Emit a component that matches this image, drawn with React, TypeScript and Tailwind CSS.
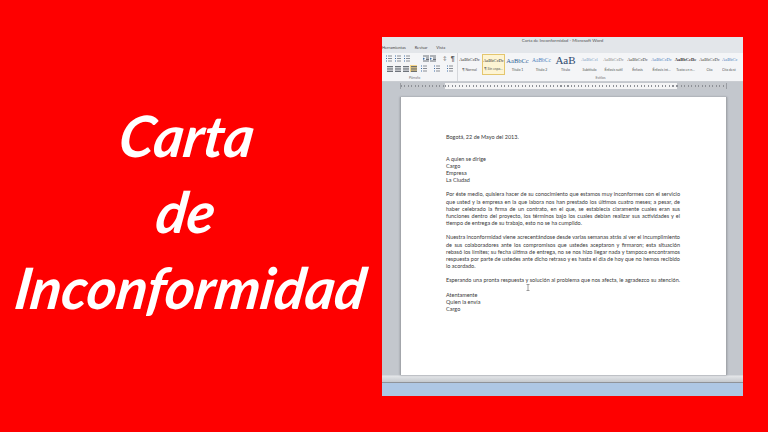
const FIRST_PARAGRAPH = [
  'Por éste medio, quisiera hacer de su conocimiento que estamos muy inconformes con el servicio',
  'que usted y la empresa en la que labora nos han prestado los últimos cuatro meses; a pesar, de',
  'haber celebrado la firma de un contrato, en el que, se establecía claramente cuales eran sus',
  'funciones dentro del proyecto, los términos bajo los cuales debían realizar sus actividades y el',
]
const SECOND_PARAGRAPH = [
  'Nuestra inconformidad viene acrecentándose desde varias semanas atrás al ver el incumplimiento',
  'de sus colaboradores ante los compromisos que ustedes aceptaron y firmaron; esta situación',
  'rebasó los límites; su fecha última de entrega, no se nos hizo llegar nada y tampoco encontramos',
  'respuesta por parte de ustedes ante dicho retraso y es hasta el día de hoy que no hemos recibido',
]
const STYLES = [
  { sample: 'AaBbCcDc', name: '¶ Normal', cls: 'text-[4.5px] text-[#333]', active: false },
  { sample: 'AaBbCcDc', name: '¶ Sin espa...', cls: 'text-[4.5px] text-[#333]', active: true },
  { sample: 'AaBbCc', name: 'Título 1', cls: 'text-[6.5px] text-[#2f5f94]', active: false },
  { sample: 'AaBbCc', name: 'Título 2', cls: 'text-[5.5px] text-[#4f81bd]', active: false },
  { sample: 'AaB', name: 'Título', cls: 'text-[11px] leading-[9px] text-[#2f4a6d]', active: false },
  { sample: 'AaBbCcl', name: 'Subtítulo', cls: 'text-[4.5px] text-[#7f9fc5]', active: false },
  { sample: 'AaBbCcDc', name: 'Énfasis sutil', cls: 'text-[4.5px] text-[#888]', active: false },
  { sample: 'AaBbCcDc', name: 'Énfasis', cls: 'text-[4.5px] text-[#444]', active: false },
  { sample: 'AaBbCcDc', name: 'Énfasis int...', cls: 'text-[4.5px] text-[#4f81bd]', active: false },
  { sample: 'AaBbCcDc', name: 'Texto en n...', cls: 'text-[4.5px] font-bold text-[#333]', active: false },
  { sample: 'AaBbCcDc', name: 'Cita', cls: 'text-[4.5px] text-[#444]', active: false },
]

function Justified ({ text }: { text: string }) {
  return <div className="text-justify [text-align-last:justify] whitespace-nowrap">{text}</div>
}

// list bullets, with the little dropdown dash after it
function ListIcon () {
  return (
    <svg width="8" height="7" viewBox="0 0 8 7" fill="none">
      <path d="M0 1h1M0 3.5h1M0 6h1" stroke="#3f6fa8" />
      <path d="M2 1h4M2 3.5h4M2 6h4" stroke="#8a8e95" />
    </svg>
  )
}

function IndentIcon () {
  return (
    <svg width="6" height="7" viewBox="0 0 6 7" fill="none">
      <path d="M0 1h6M3 3h3M3 4.5h3M0 6h6" stroke="#6b7079" />
      <path d="M0 2.5l2 1.2-2 1.2z" fill="#3f6fa8" />
    </svg>
  )
}

function AlignIcon ({ active }: { active?: boolean }) {
  return (
    <div className={'flex h-[7px] w-[7px] items-center justify-center ' + (active ? 'bg-[#f5d58a]' : '')}>
      <svg width="6" height="6" viewBox="0 0 6 6" fill="none">
        <path d="M0 .5h6M0 2.2h6M0 3.9h6M0 5.5h6" stroke="#5f646c" strokeWidth="0.9" />
      </svg>
    </div>
  )
}

function ParagraphGroup () {
  return (
    <div className="flex w-[76px] shrink-0 flex-col border-r border-[#d5d7db] pl-[4px] pt-[2px]">
      <div className="flex h-[7px] items-center">
        <div className="flex gap-[1px]"><ListIcon /><ListIcon /><ListIcon /></div>
        <div className="ml-[11px] flex gap-[1px]"><IndentIcon /><IndentIcon /></div>
        <div className="ml-[7px] flex items-center gap-[4px]">
          <span className="text-[5px] leading-[7px] text-[#555]">↕</span>
          <span className="font-['Liberation_Sans',sans-serif] text-[7px] font-bold leading-[7px] text-[#555]">¶</span>
        </div>
      </div>
      <div className="mt-[3px] flex h-[7px] items-center">
        <div className="flex gap-[1px]"><AlignIcon /><AlignIcon /><AlignIcon /><AlignIcon active /></div>
        <div className="ml-[4px] flex gap-[5px]"><ListIcon /><ListIcon /><ListIcon /></div>
      </div>
      <div className="mt-[4px] pl-[23px] text-[3.5px] leading-[5px] text-[#777]">Párrafo</div>
    </div>
  )
}

const TICKS = 'bg-[repeating-linear-gradient(90deg,#8d9096_0,#8d9096_1px,transparent_1px,transparent_3.5px)] bg-[length:100%_2px] bg-[position:0_2px] bg-no-repeat'

function Ruler () {
  return (
    <div className="mx-[18px] mr-[16px] flex h-[6px] shrink-0 items-stretch border-x border-[#9a9da3]">
      <div className={'w-[44px] bg-[#c4c7cc] ' + TICKS} />
      <div className={'w-[232px] bg-[#f4f4f5] ' + TICKS} />
      <div className={'grow bg-[#c4c7cc] ' + TICKS} />
    </div>
  )
}

function WordWindow () {
  return (
    <div className="mt-[37px] flex h-[359px] w-[361px] shrink-0 flex-col overflow-hidden bg-[#c3c7cd] font-['Lato',sans-serif]">
      {/* title bar + tabs */}
      <div className="h-[16px] shrink-0 bg-[#e3e6ea] text-[4px] text-[#555]">
        <div className="pt-[1px] text-center text-[4.5px] leading-[6px]">Carta de Inconformidad - Microsoft Word</div>
        <div className="flex gap-[9px] pt-[1px] leading-[6px] text-[#444]">
          <span>Herramientas</span>
          <span>Revisar</span>
          <span>Vista</span>
        </div>
      </div>

      {/* ribbon */}
      <div className="flex h-[29px] shrink-0 border-b border-[#c9ccd1] bg-[#f4f5f7]">
        <ParagraphGroup />
        <div className="flex min-w-0 grow flex-col">
          <div className="flex h-[23px] gap-[1px] overflow-hidden pt-[1px]">
            {STYLES.map((style, i) => (
              <div
                key={i}
                className={'flex h-[21px] w-[23px] shrink-0 flex-col items-center justify-between whitespace-nowrap py-[2px] ' + (style.active ? 'border border-[#e4c66e] bg-[#fdf4d3]' : '')}
              >
                <div className={"flex h-[9px] items-center font-['Liberation_Serif',serif] " + style.cls}>{style.sample}</div>
                <div className="text-[3.5px] leading-[5px] text-[#555]">{style.name}</div>
              </div>
            ))}
            <div className="flex h-[21px] w-[19px] shrink-0 flex-col justify-between overflow-hidden whitespace-nowrap py-[2px]">
              <div className="flex h-[9px] items-center font-['Liberation_Serif',serif] text-[4.5px] text-[#4f81bd]">AaBbCc</div>
              <div className="text-[3.5px] leading-[5px] text-[#555]">Cita dest</div>
            </div>
          </div>
          <div className="text-center text-[3.5px] leading-[5px] text-[#777]">Estilos</div>
        </div>
      </div>

      {/* document area */}
      <div className="flex min-h-0 grow flex-col pt-[1px]">
        <Ruler />
        <div className="relative ml-[18px] mr-[16px] mt-[8px] flex-1 border-x border-[#a3a6ab] bg-white pl-[45px] pr-[46px] pt-[37px] text-[5.5px] leading-[7.2px] text-[#3a3a3a] shadow-[0_0_2px_#8f9298]">
          <div>Bogotá, 22 de Mayo del 2013.</div>
          <div className="mt-[14.4px]">A quien se dirige</div>
          <div>Cargo</div>
          <div>Empresa</div>
          <div>La Ciudad</div>
          <div className="mt-[7px]">
            {FIRST_PARAGRAPH.map(line => <Justified key={line} text={line} />)}
            <div>tiempo de entrega de su trabajo, esto no se ha cumplido.</div>
          </div>
          <div className="mt-[7px]">
            {SECOND_PARAGRAPH.map(line => <Justified key={line} text={line} />)}
            <div>lo acordado.</div>
          </div>
          <div className="mt-[7px]">
            <Justified text="Esperando una pronta respuesta y solución al problema que nos afecta, le agradezco su atención." />
          </div>
          <div className="mt-[7px]">Atentamente</div>
          <div>Quien la envía</div>
          <div>Cargo</div>
          {/* text cursor */}
          <svg className="absolute left-[125px] top-[187px]" width="4" height="7" viewBox="0 0 4 7" fill="none">
            <path d="M.5.5h3M2 .5v6M.5 6.5h3" stroke="#777" strokeWidth="0.7" />
          </svg>
        </div>
      </div>

      {/* scrollbar + status bar */}
      <div className="h-[8px] shrink-0 border-t border-b border-t-[#d5d8dc] border-b-[#8f9399] bg-gradient-to-b from-[#e4e6e9] to-[#c5c9ce]" />
      <div className="h-[13px] shrink-0 bg-[#aec7e4]" />
    </div>
  )
}

export default function App () {
  return (
    <div className="flex h-[432px] w-[768px] overflow-hidden bg-[#fe0000]">
      <div className="flex w-[382px] shrink-0 flex-col items-center pt-[97px] font-['Lato',sans-serif] text-[57px] font-bold italic leading-[76px] text-white">
        <div className="-translate-x-[4px] -skew-x-[8deg]">Carta</div>
        <div className="-translate-x-[5px] -skew-x-[8deg]">de</div>
        <div className="-skew-x-[8deg] whitespace-nowrap">Inconformidad</div>
      </div>
      <WordWindow />
    </div>
  )
}
